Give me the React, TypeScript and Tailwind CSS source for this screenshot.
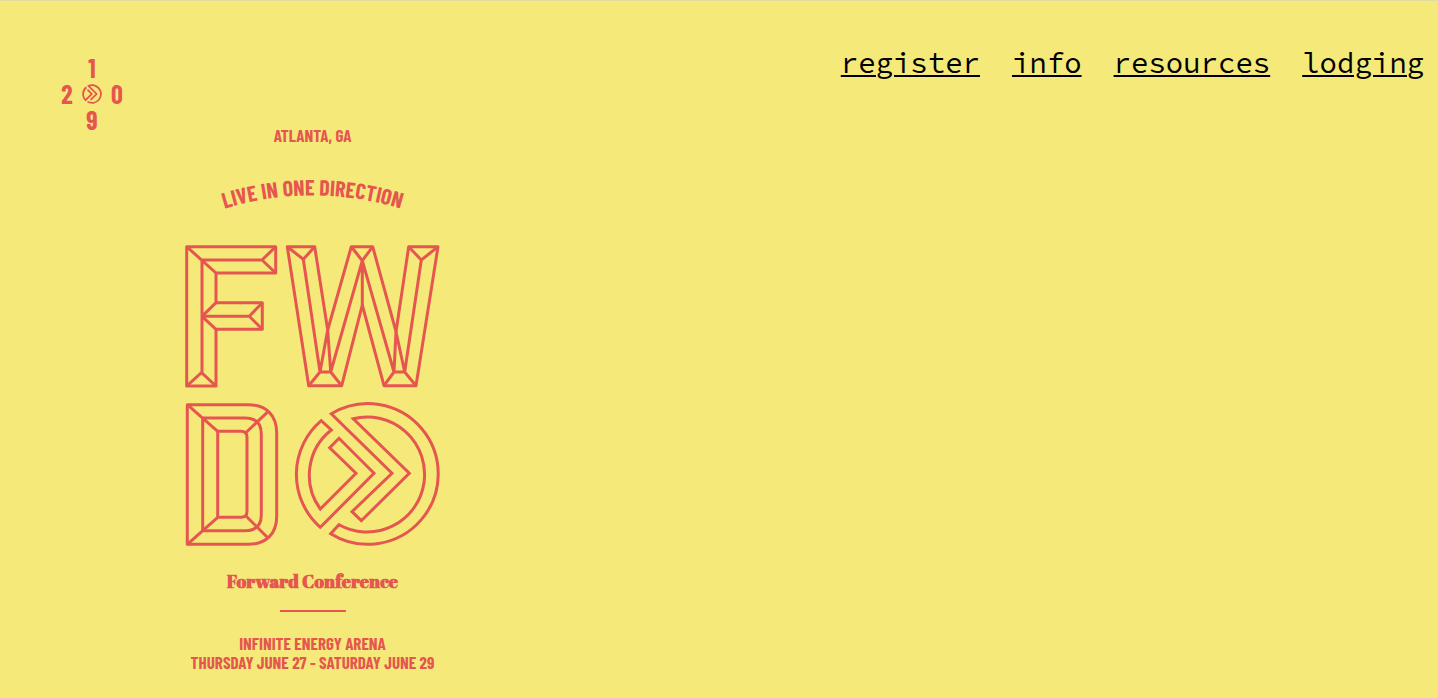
const ringOuter =
  "M331.3 413.7A70.4 70.4 0 1 1 330.7 533.7L339 524.7A57.5 57.5 0 1 0 353.3 418.7L409.3 473.3L361.3 520.7L352 511.7L392 473.3Z";
const ringInner =
  "M321.3 420.7A70.4 70.4 0 0 0 320.3 527.3L374 473.3L339 438.3L329.7 447.7L356 473.3L320.3 509A57.5 57.5 0 0 1 331.3 430Z";

function YearMark() {
  return (
    <a
      href="#top"
      aria-label="Forward 2019"
      className="grid w-16 shrink-0 grid-cols-[14px_1fr_14px] grid-rows-[26px_26px_26px] place-items-center font-['Barlow_Condensed','Roboto_Condensed',sans-serif] text-[26px] leading-[26px] font-bold"
    >
      <span className="col-start-2">1</span>
      <span className="col-start-1 row-start-2">2</span>
      <svg viewBox="295 402 144 144" className="col-start-2 row-start-2 h-5 w-5" fill="currentColor" aria-hidden="true">
        <path d={ringOuter} />
        <path d={ringInner} />
      </svg>
      <span className="col-start-3 row-start-2">0</span>
      <span className="col-start-2 row-start-3">9</span>
    </a>
  );
}

function Tagline() {
  return (
    <svg viewBox="184 170 257 45" className="mt-[26px] h-[45px] w-full" role="img" aria-label="Live in one direction">
      <path id="tagline-arc" d="M206 215A300 300 0 0 1 419 215" fill="none" />
      <text
        textAnchor="middle"
        fill="currentColor"
        className="font-['Barlow_Condensed','Roboto_Condensed',sans-serif] text-[22px] font-bold"
      >
        <textPath href="#tagline-arc" startOffset="50%">
          LIVE IN ONE DIRECTION
        </textPath>
      </text>
    </svg>
  );
}

function Emblem() {
  return (
    <svg
      viewBox="184 243 257 305"
      className="mt-7 h-[305px] w-full"
      fill="none"
      stroke="currentColor"
      strokeWidth="3"
      strokeLinejoin="round"
      role="img"
      aria-label="FWD"
    >
      {/* F */}
      <path d="M186.7 246.7H275.7V273H216V302.7H262.3V329.3H216V386H186.7Z" />
      <path d="M186.7 246.7L216 273M262 260H202V372.7M275.7 246.7L262 260L275.7 273M216 302.7L202 316.3L216 329.3M202 316.3H249.3M262.3 302.7L249.3 316.3L262.3 329.3M186.7 386L201.5 372.7L216 386" />
      {/* W */}
      <path d="M287.3 246.7H314.7L327.7 330L351.3 246.7H372.7L396 331.7L408.7 246.7H438L416 385.7H384L362.3 305L341.7 385.7H308.7Z" />
      <path d="M287.3 246.7L303.3 259.3L314.7 246.7M303.3 259.3L320 372H330.7L327.7 330L320 372L308.7 385.7M330.7 372L341.7 385.7M351.3 246.7L362.3 260.7L372.7 246.7M362.3 305V260.7L330.7 372M362.3 260.7L394 372H404.7L396 331.7L394 372L384 385.7M404.7 372L416 385.7M404.7 372L421.3 260L408.7 246.7M421.3 260L438 246.7" />
      {/* D */}
      <path d="M187.3 404.7H248.3C266 404.7 276.7 415 276.7 433V516.3C276.7 534 266 544.3 248.3 544.3H187.3Z" />
      <path d="M202.7 418H245C256 418 261.3 424 261.3 434V515C261.3 525 256 530.7 245 530.7H202.7Z" />
      <path d="M217.7 431.3H241Q247 431.3 247 437.3V511.3Q247 517.3 241 517.3H217.7Z" />
      <path d="M187.3 404.7L217.7 431.3M268.3 411.3L245.5 433M187.3 544.3L217.7 517.3M245.5 515.5L267.5 537.5" />
      {/* Arrow ring */}
      <path d={ringOuter} strokeLinejoin="miter" />
      <path d={ringInner} strokeLinejoin="miter" />
    </svg>
  );
}

const links = ["register", "info", "resources", "lodging"];

export default function App() {
  return (
    <div id="top" className="flex min-h-screen items-start border-t border-[#e2dca0] bg-[#f5ea79] text-[#e55650]">
      <div className="pt-[54px] pl-[60px]">
        <YearMark />
      </div>
      <main className="ml-[60px] flex w-[257px] shrink-0 flex-col items-center pt-[125px] pb-6 text-center font-['Barlow_Condensed','Roboto_Condensed',sans-serif] text-[17px] font-bold">
        <p className="leading-[18px]">ATLANTA, GA</p>
        <Tagline />
        <Emblem />
        <h1 className="mt-[21px] font-['Abril_Fatface','Noto_Serif_Display','Liberation_Serif',serif] text-lg leading-6 font-black whitespace-nowrap">
          Forward Conference
        </h1>
        <hr className="mt-[17px] w-[66px] border-t-2 border-current" />
        <div className="mt-[22px] leading-[19px] whitespace-nowrap">
          <p>INFINITE ENERGY ARENA</p>
          <p>THURSDAY JUNE 27 - SATURDAY JUNE 29</p>
        </div>
      </main>
      <nav className="ml-auto flex gap-8 pt-11 pr-[14px] font-['Source_Code_Pro','Noto_Sans_Mono','DejaVu_Sans_Mono',monospace] text-[29px] leading-9 text-black">
        {links.map((link) => (
          <a key={link} href={`#${link}`} className="underline decoration-2 underline-offset-2">
            {link}
          </a>
        ))}
      </nav>
    </div>
  );
}
